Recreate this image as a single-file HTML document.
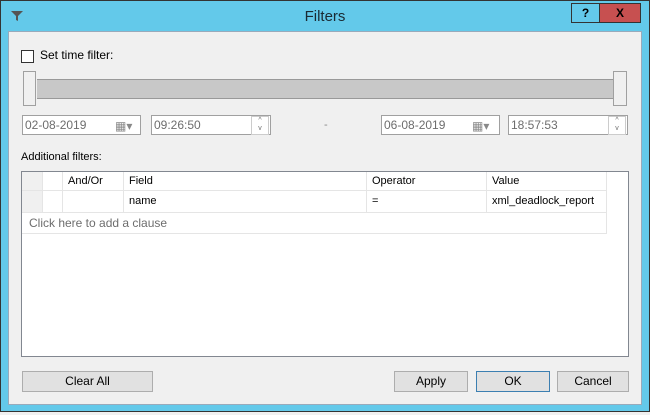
<!DOCTYPE html><html><head><style>
body{margin:0;width:650px;height:415px;background:#f0f0f0;position:relative;overflow:hidden;font-family:"Liberation Sans",sans-serif;font-size:11px;color:#000}
div{position:absolute;box-sizing:border-box}
.f{border:1px solid #a0a0a0;background:#fff;color:#6d6d6d;padding:2px 0 0 2px;font-size:12px;height:20px;top:115px}
.b{border:1px solid #adadad;background:#e1e1e1;height:21px;top:371px;text-align:center;line-height:19px;font-size:12px}
.c{border-right:1px solid #e5e5e5;border-bottom:1px solid #e5e5e5;height:19px;line-height:18px;padding-left:5px}
</style></head><body>
<div style="left:0;top:0;width:650px;height:412px;background:#63c9ea;border:1px solid #333"></div>
<div style="left:8px;top:31px;width:634px;height:374px;background:#f0f0f0;border:1px solid #9ab"></div>
<svg style="position:absolute;left:10px;top:10px" width="14" height="12"><path d="M1 1H13L8 6V11L6 10V6Z" fill="#555"/></svg>
<div style="left:0;top:8px;width:650px;text-align:center;font-size:15px;color:#1a2a33">Filters</div>
<div style="left:571px;top:3px;width:29px;height:20px;border:1px solid #333;background:#63c9ea;text-align:center;font-weight:bold;font-size:12px;line-height:18px">?</div>
<div style="left:599px;top:3px;width:42px;height:20px;border:1px solid #333;background:#c75050;text-align:center;font-weight:bold;font-size:12px;line-height:18px">X</div>
<div style="left:21px;top:50px;width:13px;height:13px;border:1px solid #333;background:#fff"></div>
<div style="left:40px;top:48px;font-size:12px">Set time filter:</div>
<div style="left:37px;top:79px;width:576px;height:20px;background:#c8c8c8;border-top:1px solid #999;border-bottom:1px solid #999"></div>
<div style="left:23px;top:71px;width:13px;height:35px;border:1px solid #a0a0a0;background:#f0f0f0"></div>
<div style="left:613px;top:71px;width:14px;height:35px;border:1px solid #a0a0a0;background:#f0f0f0"></div>
<div class="f" style="left:22px;width:119px">02-08-2019<span style="position:absolute;left:92px;top:3px;color:#888">▦▾</span></div>
<div class="f" style="left:151px;width:120px">09:26:50<span style="position:absolute;left:99px;top:0;width:16px;height:17px;border:1px solid #ccc;font-size:7px;line-height:8px;text-align:center">^<br>v</span></div>
<div style="left:324px;top:119px;color:#888">-</div>
<div class="f" style="left:381px;width:119px">06-08-2019<span style="position:absolute;left:90px;top:3px;color:#888">▦▾</span></div>
<div class="f" style="left:508px;width:120px">18:57:53<span style="position:absolute;left:99px;top:0;width:16px;height:17px;border:1px solid #ccc;font-size:7px;line-height:8px;text-align:center">^<br>v</span></div>
<div style="left:21px;top:151px;font-size:11px">Additional filters:</div>
<div style="left:21px;top:171px;width:608px;height:186px;border:1px solid #828790;background:#fff">
<div class="c" style="left:0;top:0;width:21px;background:#f0f0f0"></div>
<div class="c" style="left:21px;top:0;width:20px"></div>
<div class="c" style="left:41px;top:0;width:61px">And/Or</div>
<div class="c" style="left:102px;top:0;width:243px">Field</div>
<div class="c" style="left:345px;top:0;width:120px">Operator</div>
<div class="c" style="left:465px;top:0;width:120px">Value</div>
<div class="c" style="left:0;top:19px;width:21px;height:22px;background:#f0f0f0"></div>
<div class="c" style="left:21px;top:19px;width:20px;height:22px"></div>
<div class="c" style="left:41px;top:19px;width:61px;height:22px"></div>
<div class="c" style="left:102px;top:19px;width:243px;height:22px;line-height:21px">name</div>
<div class="c" style="left:345px;top:19px;width:120px;height:22px;line-height:21px">=</div>
<div class="c" style="left:465px;top:19px;width:120px;height:22px;line-height:21px">xml_deadlock_report</div>
<div class="c" style="left:0;top:41px;width:585px;height:21px;line-height:21px;color:#6d6d6d;padding-left:7px;font-size:12px">Click here to add a clause</div>
</div>
<div class="b" style="left:22px;width:131px">Clear All</div>
<div class="b" style="left:394px;width:74px">Apply</div>
<div class="b" style="left:476px;width:74px;border-color:#3c7fb1">OK</div>
<div class="b" style="left:557px;width:72px">Cancel</div>
</body></html>
